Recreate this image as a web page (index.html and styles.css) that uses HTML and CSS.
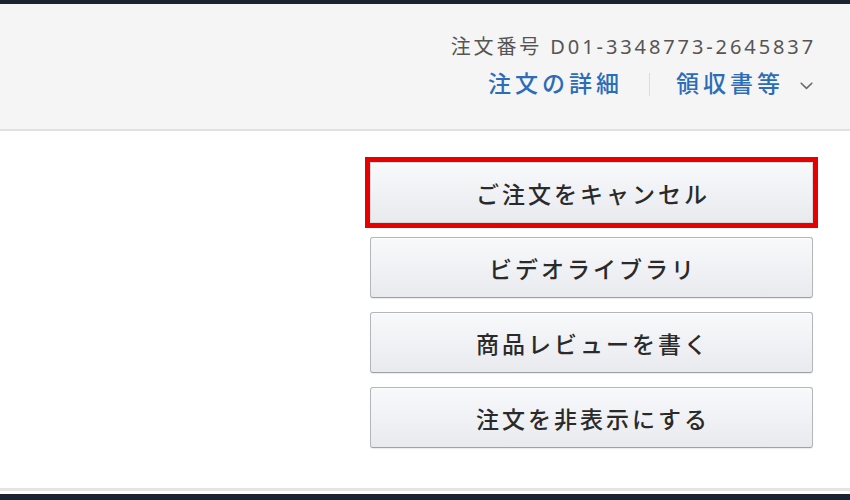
FILE: index.html
```html
<!DOCTYPE html>
<html lang="ja">
<head>
<meta charset="utf-8">
<link rel="stylesheet" href="styles.css">
</head>
<body>
<div class="topbar"></div>
<header class="order-head">
  <div class="order-no">注文番号 D01-3348773-2645837</div>
  <div class="links">
    <a class="link">注文の詳細</a>
    <span class="divider"></span>
    <a class="link">領収書等</a>
    <svg class="chev" width="13" height="8" viewBox="0 0 13 8"><path d="M1.2 1.2 L6.5 6.4 L11.8 1.2" fill="none" stroke="#6b6b6b" stroke-width="1.6" stroke-linecap="round" stroke-linejoin="round"/></svg>
  </div>
</header>
<main class="actions">
  <div class="btn highlight">ご注文をキャンセル</div>
  <div class="btn">ビデオライブラリ</div>
  <div class="btn">商品レビューを書く</div>
  <div class="btn">注文を非表示にする</div>
</main>
<footer class="foot">
  <div class="foot-line"></div>
  <div class="foot-bar"></div>
</footer>
</body>
</html>
```

FILE: styles.css
```css
html, body {
  margin: 0;
  padding: 0;
}
body {
  width: 850px;
  height: 500px;
  display: flex;
  flex-direction: column;
  background: #ffffff;
  font-family: "Liberation Sans", "Noto Sans CJK JP", sans-serif;
  overflow: hidden;
}
.topbar {
  height: 4px;
  background: #1a2430;
  flex: none;
}
.order-head {
  flex: none;
  height: 127px;
  box-sizing: border-box;
  background: #f5f5f5;
  border-bottom: 2px solid #e1e1e1;
  display: flex;
  flex-direction: column;
  align-items: flex-end;
  padding: 31px 34px 0 0;
}
.order-no {
  font-size: 20px;
  line-height: 24px;
  color: #555555;
  letter-spacing: 2.9px;
  font-family: "Noto Sans", "Noto Sans CJK JP", sans-serif;
}
.links {
  display: flex;
  align-items: center;
  margin-top: 12px;
  height: 26px;
}
.link {
  font-size: 23px;
  line-height: 26px;
  color: #2c6cb8;
  letter-spacing: 4px;
  font-weight: 500;
}
.divider {
  width: 1px;
  height: 23px;
  background: #dcdcdc;
  margin: 0 26px 0 26px;
}
.chev {
  margin-left: 16px;
  margin-right: 3px;
  margin-top: 4px;
}
.actions {
  flex: 1;
  display: flex;
  flex-direction: column;
  align-items: flex-end;
  gap: 14px;
  padding: 31px 37px 0 0;
}
.btn {
  width: 443px;
  height: 61px;
  box-sizing: border-box;
  display: flex;
  align-items: center;
  justify-content: center;
  border: 1px solid #b4b6ba;
  border-bottom-color: #9ea1a6;
  border-radius: 3px;
  background: linear-gradient(#f8f9fb, #e8eaee);
  box-shadow: 0 1px 0 rgba(255,255,255,0.6) inset, 0 1px 1px rgba(0,0,0,0.08);
  font-size: 23px;
  font-weight: 500;
  letter-spacing: 3px;
  padding-left: 3px;
  color: #2a2a2a;
}
.btn.highlight {
  border-radius: 0;
  outline: 5px solid #e80000;
  border-color: #d5d7db;
}
.foot {
  flex: none;
  display: flex;
  flex-direction: column;
}
.foot-line {
  height: 3px;
  background: #e4e4e4;
  margin-bottom: 3px;
}
.foot-bar {
  height: 6px;
  background: #1a2430;
}
```
